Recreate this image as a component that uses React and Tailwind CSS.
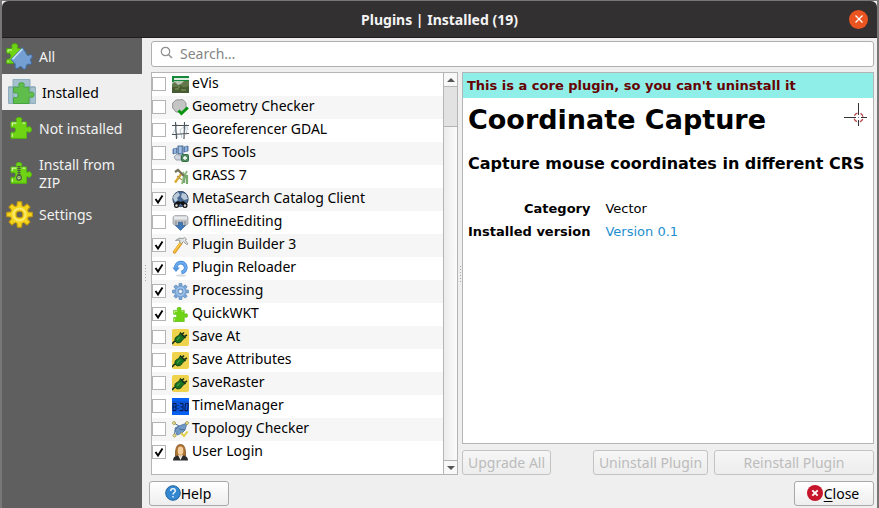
import { useState } from "react";

const PUZZLE =
  "M1 5H6C7 5 6.900 4.300 6.500 3.600C5.400 1.700 6.800.5 9 .5S12.600 1.700 11.500 3.600C11.100 4.300 11 5 12 5H16.500V9.500C16.500 10.500 17.200 10.500 18 10.100C20 9.200 21.500 10.400 21.500 12.500S20 15.800 18 14.900C17.200 14.500 16.500 14.500 16.500 15.500V21.300H1V16C1 15 1.800 15 2.600 15.300C4.400 15.900 5.600 14.700 5.600 12.900S4.400 10 2.600 10.700C1.800 11 1 11 1 10Z";

function PuzzleIcon({ className, zip }) {
  return (
    <svg viewBox="0 0 22 22" className={className} aria-hidden="true">
      <path d={PUZZLE} fill="#6fd414" stroke="#53b80c" />
      <path d="M2.300 9V6.200H6.500M12.500 6.200H15.300M2.300 20V16.700" fill="none" stroke="#d3f7a8" strokeWidth="1.200" />
      {zip && (
        <g fill="none" stroke="#4d5a48">
          <path d="M9 4V13" strokeWidth="3.400" strokeDasharray="1 1" />
          <path d="M9 4V13" />
          <rect x="6.800" y="13.300" width="4.400" height="4.700" rx="2" fill="#b8e886" strokeWidth="1.300" />
          <path d="M9 14.500V16" />
        </g>
      )}
    </svg>
  );
}

function AllIcon() {
  return (
    <svg viewBox="0 0 27 27" className="size-[27px]" aria-hidden="true">
      <path d="M.7 5.500H5.500C6.200 5.500 6 4.500 5.800 3.800C5.200 1.800 6.800.6 8.700.6S12.300 1.800 11.600 3.800C11.300 4.700 11.400 5.500 12.200 5.500H17V9C19 9 21 10 21 12L7 20.500H.7V16.500C4.500 16.500 6 13 4 10.800C3 10 .7 11 .7 9.500Z" fill="#6fd414" stroke="#4ba80d" />
      <path d="M2 9V7H6M2 19.500V17.500" fill="none" stroke="#d3f7a8" />
      <path d="M16.500 4.500L19 8.300C20.500 9 19.500 11.500 21.500 12.200C23.500 13 24.500 10 26 12.500C27 15 24.500 15.200 24.500 16.800C24.500 18.500 26.500 20 25 21C23.500 22 22.500 20.500 21 21.500C19.600 22.500 21 25.500 18.500 26.200C16 26.500 16.500 23.600 14.500 23.600C13 23.600 12 26.500 9.800 25.300C8 24 10 22 9 20.800L5 16.500Z" fill="#739fd3" stroke="#3d6aa7" />
      <path d="M6.500 16.300L16.300 6" stroke="#d7e8fa" strokeWidth="1.400" />
    </svg>
  );
}

function InstalledIcon() {
  return (
    <svg viewBox="0 0 28 26" className="h-[26px] w-7" aria-hidden="true">
      <path d="M5 .5H22V8H27.500V24.500H.5V8H5Z" fill="#a3c0cf" stroke="#8fadbd" />
      <path d="M5 8V24M22 8V24M.5 8H27" stroke="#83a3b4" fill="none" />
      <g transform="translate(4.500 3.200)">
        <path d={PUZZLE} fill="#5fbd4c" stroke="#47a33e" />
      </g>
    </svg>
  );
}

function GearIcon({ className, color, edge, light, hole }) {
  return (
    <svg viewBox="0 0 26 26" className={className} aria-hidden="true">
      {[0, 45, 90, 135, 180, 225, 270, 315].map((a) => (
        <path key={a} d="M10.300 6L11 .7H15L15.700 6Z" fill={color} stroke={edge} transform={`rotate(${a} 13 13)`} />
      ))}
      <circle cx="13" cy="13" r="8.500" fill={color} />
      <circle cx="13" cy="13" r="5.800" fill="none" stroke={light} strokeWidth="2" />
      <circle cx="13" cy="13" r="3.200" fill={hole} stroke={edge} />
    </svg>
  );
}

function Small({ children }) {
  return (
    <svg viewBox="0 0 17 17" className="size-[17px]" aria-hidden="true">
      {children}
    </svg>
  );
}

const EVis = () => (
  <Small>
    <path d="M0 0H17V17H0Z" fill="#4e6938" />
    <path d="M0 5H17V10H0Z" fill="#b9c4b4" />
    <path d="M0 0H17V2H0ZM0 4H17V5H0Z" fill="#15883a" />
    <path d="M0 2H17V4H0Z" fill="#dcecdf" />
    <path d="M0 2H2V6H0Z" fill="#15883a" />
    <path d="M0 8L3 6L6 9L9 8L12 5H17V11H0Z" fill="#63784a" />
    <path d="M0 11H5L8 9L12 12L17 10V17H0Z" fill="#465b31" />
    <path d="M3 13H7M9 14H14M6 11H8" stroke="#899c5e" />
  </Small>
);
const Geometry = () => (
  <Small>
    <path d="M4 1L11 .7L14 4V9L10 13H4L.7 9V4Z" fill="#c5c5c5" stroke="#929292" />
    <path d="M6.500 11.500L9.500 14.500L15.800 8.500" fill="none" stroke="#079410" strokeWidth="3" />
  </Small>
);
const Georef = () => (
  <Small>
    <path d="M5 2L3 8L6 16M3 8L0 13M8 8L13 4L15 12M8 8L10 16M14 2L16 8" fill="none" stroke="#bccdd6" />
    <path d="M3.500 0L4.500 17M12.500 0L12 17M0 3.500H17M0 12.500L17 11.500" stroke="#4b5359" strokeWidth="1.100" />
  </Small>
);
const Gps = () => (
  <Small>
    <path d="M1 4L5 3V8L1 9Z" fill="#668fc3" stroke="#466a99" strokeWidth=".8" />
    <path d="M12 2L16 1V6L12 7Z" fill="#668fc3" stroke="#466a99" strokeWidth=".8" />
    <rect x="6" y="1" width="5" height="8" fill="#86aad6" stroke="#34547f" strokeWidth=".8" />
    <path d="M3 3.500V8.500M14 1.500V6.500M8 1.500V8" stroke="#c4d8ef" />
    <path d="M5 9L2 12L4 15H9V11Z" fill="#cfd6de" stroke="#88919c" strokeWidth=".8" />
    <rect x="9.500" y="9.500" width="7" height="7" rx="1" fill="#4f8c60" stroke="#376c49" />
    <path d="M13 11V15M11 13H15" stroke="#fff" strokeWidth="1.300" />
  </Small>
);
const Grass = () => (
  <Small>
    <path d="M10 16Q13 7 11 4M12 11Q13 6 15 3" stroke="#8ebd80" strokeWidth="2" fill="none" />
    <path d="M12 15Q12 9 14 7M15 16V7" stroke="#78a96d" strokeWidth="2.200" fill="none" />
    <path d="M3 14.500L10 5" stroke="#d9a92f" strokeWidth="2.300" />
    <path d="M3 4L6 2L12 8" fill="none" stroke="#75705a" strokeWidth="2.200" />
    <path d="M5 8L10 12" stroke="#b29d57" strokeWidth="1.500" />
  </Small>
);
const MetaSearch = () => (
  <Small>
    <circle cx="8.500" cy="8" r="7.700" fill="#4a6a94" stroke="#213754" strokeWidth=".8" />
    <path d="M2 4L6 1L8 4L5 7L6 9L3 11L1 7ZM10 2L14 3L16 8L12 9L9 6Z" fill="#b9cbd8" />
    <path d="M3 12L6 10L8.500 11L11 10L14 12L15.500 14H10L8.500 12.500L7 14H1.500Z" fill="#111" />
    <circle cx="4.500" cy="14.500" r="1.900" fill="#ddd" stroke="#111" strokeWidth="1.200" />
    <circle cx="13" cy="14.500" r="1.900" fill="#ddd" stroke="#111" strokeWidth="1.200" />
  </Small>
);
const Offline = () => (
  <Small>
    <path d="M1 3L3 1.500H14L16 3V10L13 12H4L1 10Z" fill="#bfc2c6" stroke="#a3a8ad" strokeWidth=".8" />
    <path d="M2 4H15" stroke="#e8e9eb" strokeWidth="3" />
    <path d="M4 7V11M7 7V11M10 7V11M13 7V11" stroke="#81878e" />
    <path d="M6.500 8.500H10.500V11.500H13.500L8.500 16.500L3.500 11.500H6.500Z" fill="#3f78bb" stroke="#2c588e" strokeWidth=".6" />
  </Small>
);
const Builder = () => (
  <Small>
    <path d="M2.500 15L9 6" stroke="#d99a22" strokeWidth="3.200" strokeLinecap="round" />
    <path d="M2.500 14.500L8.500 6" stroke="#f8c548" strokeWidth="1.800" strokeLinecap="round" />
    <path d="M3.500 3.500Q7 0 11 1.500L12.500.5L14.500 2L13.500 3.500L16 7L14.500 7.500L11.500 4.500L9.500 6.500L7.500 5L8 3Z" fill="#dfe2e2" stroke="#858a88" strokeWidth=".8" />
  </Small>
);
const Reloader = () => (
  <Small>
    <ellipse cx="9" cy="15.500" rx="5" ry="1" fill="#d5d9de" />
    <path d="M4 8A4.900 4.900 0 1 1 9.500 12.400" fill="none" stroke="#4286d5" strokeWidth="3.800" />
    <path d="M4 8A4.900 4.900 0 1 1 9.500 12.400" fill="none" stroke="#69a9ed" strokeWidth="2.400" />
    <path d="M.3 7.500H8L4 12Z" fill="#5495df" />
  </Small>
);
const Plug = () => (
  <Small>
    <rect width="17" height="17" rx="2" fill="#f0d34c" />
    <path d="M0 15Q2 12 4 12" fill="none" stroke="#183418" strokeWidth="1.600" />
    <path d="M3 12Q2 8 6 7L8.500 4L13 8.500L10.500 11Q9 14.500 5 14Z" fill="#167020" stroke="#0a3710" strokeWidth=".7" />
    <path d="M9.500 6L12 3.500M11.500 8L15 6M8 3.500L13.500 9" stroke="#183418" strokeWidth="1.600" />
    <path d="M5 11L8 8" stroke="#3f9b44" strokeWidth="1.400" />
  </Small>
);
const Clock = () => (
  <Small>
    <path d="M0 0H17V17H0Z" fill="#0660f2" />
    <path d="M0 3H17V14H0Z" fill="#0b54d8" />
    <path d="M1 5.500H4V12.500H1ZM1 9H4M8 5.500H11V12.500H7.500M8.500 9H11M12.800 12.500L13.500 5.500H16.300L15.600 12.500Z" fill="none" stroke="#04184f" />
    <path d="M5.500 7H6.500V8H5.500ZM5.500 10H6.500V11H5.500Z" fill="#04184f" />
  </Small>
);
const Topology = () => (
  <Small>
    <path d="M3 7L7 5L15 2L13 9L10 12L5 14L3.500 10Z" fill="#7299c4" stroke="#4a6f9c" strokeWidth=".8" />
    <path d="M2 2L7 5L3 9L2.500 14M13 9L7 8" fill="none" stroke="#4a6f9c" />
    <path d="M9 12L12 15L15.500 10.500" fill="none" stroke="#e0cf47" strokeWidth="2" />
    <g fill="#f0e58b" stroke="#928a42" strokeWidth=".7">
      <circle cx="2" cy="2" r="1.500" />
      <circle cx="15" cy="2" r="1.500" />
      <circle cx="2.500" cy="14.500" r="1.500" />
    </g>
  </Small>
);
const User = () => (
  <Small>
    <path d="M3.500 12Q3 0 8.500.5Q14 0 13.500 12Z" fill="#b27633" stroke="#7c4b1c" strokeWidth=".8" />
    <path d="M1 16.500Q1 11.800 6 11.500H11Q16 11.800 16 16.500Z" fill="#2d2b2a" />
    <path d="M6 11L8.500 16L11 11Z" fill="#f4f4f4" />
    <ellipse cx="8.500" cy="6.700" rx="2.800" ry="4.200" fill="#f4cf9f" />
    <path d="M7.300 10H9.700V12L8.500 13L7.300 12Z" fill="#e5b781" />
  </Small>
);
const Processing = () => <GearIcon className="size-[17px]" color="#79a5d8" edge="#557fae" light="#a6c6ea" hole="#f5f7fa" />;
const Quick = () => <PuzzleIcon className="size-[15px]" />;

const plugins = [
  ["eVis", EVis, false],
  ["Geometry Checker", Geometry, false],
  ["Georeferencer GDAL", Georef, false],
  ["GPS Tools", Gps, false],
  ["GRASS 7", Grass, false],
  ["MetaSearch Catalog Client", MetaSearch, true],
  ["OfflineEditing", Offline, false],
  ["Plugin Builder 3", Builder, true],
  ["Plugin Reloader", Reloader, true],
  ["Processing", Processing, true],
  ["QuickWKT", Quick, true],
  ["Save At", Plug, false],
  ["Save Attributes", Plug, false],
  ["SaveRaster", Plug, false],
  ["TimeManager", Clock, false],
  ["Topology Checker", Topology, false],
  ["User Login", User, true],
];

function PluginRow({ name, Icon, initial }) {
  const [checked, setChecked] = useState(initial);
  return (
    <li className="h-[23px] odd:bg-white even:bg-[#f6f6f6]">
      <label className="flex h-full items-center">
        <span className="mb-0.5 grid size-3.5 shrink-0">
          <input
            type="checkbox"
            checked={checked}
            onChange={() => setChecked(!checked)}
            className="col-start-1 row-start-1 size-3.5 appearance-none border border-[#b4b4b4] bg-white"
          />
          {checked && (
            <svg viewBox="0 0 14 14" className="pointer-events-none col-start-1 row-start-1 size-3.5" aria-hidden="true">
              <path d="M3.500 7L6 10.500L10.500 3.500" fill="none" stroke="#000" strokeWidth="1.900" />
            </svg>
          )}
        </span>
        <span className="ml-1.5 flex w-[17px] shrink-0 justify-center">
          <Icon />
        </span>
        <span className="ml-[3px] pb-1 leading-[19px] whitespace-nowrap">{name}</span>
      </label>
    </li>
  );
}

function NavItem({ icon, children, active }) {
  return (
    <button
      type="button"
      aria-current={active ? "page" : undefined}
      className={
        active
          ? "flex min-h-9 w-full items-center gap-1.5 bg-[#efefef] pr-6 pl-1.5 text-left leading-[18px] text-black"
          : "flex min-h-9 w-full items-center gap-1.5 pr-6 pl-[3px] text-left leading-[18px] text-[#f2f2f2]"
      }
    >
      <span className="flex w-7 shrink-0 justify-center">{icon}</span>
      <span className="pt-0.5">{children}</span>
    </button>
  );
}

function Grip() {
  return (
    <div role="separator" aria-orientation="vertical" className="flex flex-col items-center justify-center gap-0.5">
      {[0, 1, 2, 3, 4, 5].map((i) => (
        <span key={i} className="size-px bg-[#a8a8a8]" />
      ))}
    </div>
  );
}

const BUTTON = "h-[25px] rounded-[3px] border bg-linear-to-b leading-[19px] whitespace-nowrap";
const DISABLED = "border-[#c3c3c3] from-[#f6f6f6] to-[#ededed] text-[#bcbcbc]";
const ENABLED = "flex items-center justify-center border-[#a9a9a9] from-[#ffffff] to-[#eeeeee] pr-0.5 text-black";

export default function App() {
  return (
    <div className="flex min-h-screen flex-col border-x-2 border-t border-[#777777] bg-[#efefef] font-['Noto_Sans','Open_Sans',sans-serif] text-sm text-black">
      <header className="grid h-[37px] grid-cols-[1fr_auto_1fr] items-center rounded-t-md border-b border-[#1e1c1d] bg-[#333031] px-[9px]">
        <h1 className="col-start-2 pt-px font-bold text-[#f4f4f4]">Plugins | Installed (19)</h1>
        <button type="button" aria-label="Close window" className="grid size-[19px] place-items-center justify-self-end rounded-full bg-[#e95420]">
          <svg viewBox="0 0 10 10" className="size-2.5" aria-hidden="true">
            <path d="M1.500 1.500L8.500 8.500M8.500 1.500L1.500 8.500" stroke="#fff" strokeWidth="1.300" />
          </svg>
        </button>
      </header>

      <div className="flex flex-1">
        <nav aria-label="Plugin views" className="w-[140px] shrink-0 bg-[#5f5f5f]">
          <NavItem icon={<AllIcon />}>All</NavItem>
          <NavItem icon={<InstalledIcon />} active>Installed</NavItem>
          <NavItem icon={<PuzzleIcon className="ml-1 size-[22px]" />}>
            <span className="whitespace-nowrap">Not installed</span>
          </NavItem>
          <div className="pt-2 pb-1">
            <NavItem icon={<PuzzleIcon className="ml-1 size-[22px]" zip />}>Install from ZIP</NavItem>
          </div>
          <NavItem icon={<GearIcon className="size-[27px]" color="#f3d51e" edge="#c39a0c" light="#fbea6a" hole="#5f5f5f" />}>Settings</NavItem>
        </nav>

        <div className="flex w-[7px] shrink-0 justify-center">
          <Grip />
        </div>

        <main className="flex min-w-0 flex-1 flex-col py-0.5 pr-[3px]">
          <label className="mt-px ml-0.5 flex h-[26px] items-center rounded-[3px] border border-[#b0b0b0] bg-white pl-2">
            <svg viewBox="0 0 14 14" className="mb-0.5 size-3.5 shrink-0" aria-hidden="true">
              <circle cx="5.500" cy="5.500" r="4.200" fill="none" stroke="#8e8e8e" strokeWidth="1.200" />
              <path d="M8.700 8.700L12 12" stroke="#8e8e8e" strokeWidth="1.400" />
            </svg>
            <input type="text" aria-label="Search plugins" placeholder="Search…" className="ml-1.5 min-w-0 flex-1 bg-transparent outline-none placeholder:text-[#858585]" />
          </label>

          <div className="mt-[5px] ml-0.5 grid flex-1 grid-cols-[307fr_4px_412fr]">
            <section aria-label="Plugins" className="flex min-w-0 border border-[#b5b5b5] bg-white">
              <ul className="min-w-0 flex-1">
                {plugins.map(([name, Icon, initial]) => (
                  <PluginRow key={name} name={name} Icon={Icon} initial={initial} />
                ))}
              </ul>
              <div className="flex w-3.5 shrink-0 flex-col border-l border-[#b5b5b5] bg-linear-to-r from-[#ececec] to-[#fbfbfb]">
                <button type="button" aria-label="Scroll up" className="grid h-[13px] place-items-center bg-[#f8f8f8]">
                  <svg viewBox="0 0 8 4" className="h-1 w-2" aria-hidden="true">
                    <path d="M0 4L4 0L8 4Z" fill="#555" />
                  </svg>
                </button>
                <div className="h-[41px] border-y border-[#b5b5b5] bg-[#e2e2e2]" />
                <div className="flex-1" />
                <button type="button" aria-label="Scroll down" className="grid h-3.5 place-items-center border-t border-[#b5b5b5] bg-[#f8f8f8]">
                  <svg viewBox="0 0 8 4" className="h-1 w-2" aria-hidden="true">
                    <path d="M0 0L4 4L8 0Z" fill="#555" />
                  </svg>
                </button>
              </div>
            </section>

            <Grip />

            <section aria-label="Plugin details" className="flex min-w-0 flex-col">
              <article className="flex-1 border border-[#b5b5b5] bg-white font-['DejaVu_Sans',sans-serif] text-[13px]">
                <p className="h-[25px] bg-[#90eee8] px-1 leading-[25px] font-bold text-[#660000]">This is a core plugin, so you can't uninstall it</p>
                <div className="flex items-start justify-between px-[5px]">
                  <h2 className="mt-1 text-[27px] leading-9 font-bold whitespace-nowrap">Coordinate Capture</h2>
                  <svg viewBox="0 0 24 24" className="mt-[5px] size-6" aria-hidden="true">
                    <circle cx="14.500" cy="14.500" r="4.500" fill="none" stroke="#b64146" strokeWidth="1.300" strokeDasharray="4 3.070" strokeDashoffset="-1.500" />
                    <path d="M0 14.500H12M17 14.500H23M14.500 0V12M14.500 17V23" stroke="#333" />
                    <path d="M14 14.500H15" stroke="#777" />
                  </svg>
                </div>
                <h3 className="mt-3.5 px-[5px] text-base leading-6 font-bold whitespace-nowrap">Capture mouse coordinates in different CRS</h3>
                <table className="mt-[21px] ml-[5px]">
                  <tbody className="leading-[23px]">
                    <tr>
                      <th scope="row" className="text-right font-bold">Category</th>
                      <td className="pl-[15px]">Vector</td>
                    </tr>
                    <tr>
                      <th scope="row" className="text-right font-bold">Installed version</th>
                      <td className="pl-[15px]">
                        <a href="#version" className="text-[#1d8fcf]">Version 0.1</a>
                      </td>
                    </tr>
                  </tbody>
                </table>
              </article>
              <div className="mt-1.5 flex">
                <button type="button" disabled className={`${BUTTON} ${DISABLED} w-[89px]`}>Upgrade All</button>
                <div className="flex-1" />
                <button type="button" disabled className={`${BUTTON} ${DISABLED} w-[115px]`}>Uninstall Plugin</button>
                <button type="button" disabled className={`${BUTTON} ${DISABLED} ml-1.5 w-40`}>Reinstall Plugin</button>
              </div>
            </section>
          </div>

          <footer className="mt-1.5 flex justify-between">
            <button type="button" className={`${BUTTON} ${ENABLED} w-20`}>
              <svg viewBox="0 0 16 16" className="mb-0.5 size-4" aria-hidden="true">
                <circle cx="8" cy="8" r="7.300" fill="#3488d1" stroke="#20639f" />
                <path d="M5.700 6Q5.700 3.700 8 3.700T10.300 6C10.300 7.500 8 7.500 8 9.500M8 11V12.500" fill="none" stroke="#fff" strokeWidth="1.300" />
              </svg>
              Help
            </button>
            <button type="button" className={`${BUTTON} ${ENABLED} w-20`}>
              <svg viewBox="0 0 16 16" className="mr-px mb-0.5 size-4" aria-hidden="true">
                <circle cx="8" cy="8" r="8" fill="#c7162b" />
                <path d="M5.300 5.300L10.700 10.700M10.700 5.300L5.300 10.700" stroke="#fff" strokeWidth="1.900" />
              </svg>
              <span><u className="underline-offset-2">C</u>lose</span>
            </button>
          </footer>
        </main>
      </div>
    </div>
  );
}
